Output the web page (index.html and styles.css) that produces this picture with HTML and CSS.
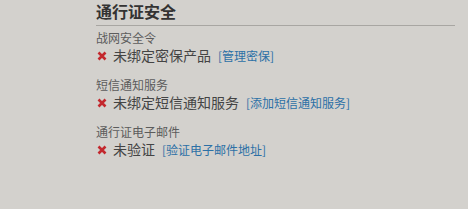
FILE: index.html
```html
<!DOCTYPE html>
<html lang="zh-CN">
<head>
  <meta charset="UTF-8">
  <title>通行证安全</title>
  <link rel="stylesheet" href="styles.css">
</head>
<body>
  <div class="security">
    <h2 class="security-title">通行证安全</h2>

    <div class="item">
      <div class="item-label">战网安全令</div>
      <div class="item-status">
        <svg class="icon-x" viewBox="0 0 10 10"><path d="M1.5 1.5 L8.5 8.5 M8.5 1.5 L1.5 8.5"/></svg>
        <span>未绑定密保产品</span>
        <a href="#" class="item-link">[管理密保]</a>
      </div>
    </div>

    <div class="item">
      <div class="item-label">短信通知服务</div>
      <div class="item-status">
        <svg class="icon-x" viewBox="0 0 10 10"><path d="M1.5 1.5 L8.5 8.5 M8.5 1.5 L1.5 8.5"/></svg>
        <span>未绑定短信通知服务</span>
        <a href="#" class="item-link">[添加短信通知服务]</a>
      </div>
    </div>

    <div class="item">
      <div class="item-label">通行证电子邮件</div>
      <div class="item-status">
        <svg class="icon-x" viewBox="0 0 10 10"><path d="M1.5 1.5 L8.5 8.5 M8.5 1.5 L1.5 8.5"/></svg>
        <span>未验证</span>
        <a href="#" class="item-link">[验证电子邮件地址]</a>
      </div>
    </div>
  </div>
</body>
</html>
```

FILE: styles.css
```css
body {
  margin: 0;
  background-color: #d3d1cd;
  font-family: "Noto Sans CJK SC", "Liberation Sans", sans-serif;
  color: #444;
}

.security {
  padding-left: 96px;
  width: 359px;
}

.security-title {
  margin: 0;
  padding: 1px 0 4px 0;
  font-size: 16px;
  line-height: 20px;
  font-weight: bold;
  color: #333;
  border-bottom: 1px solid #a8a6a2;
}

.item {
  margin-top: 4px;
  margin-bottom: 12px;
}

.item-label {
  font-size: 12px;
  line-height: 16px;
  color: #5c5c5c;
}

.item-status {
  display: flex;
  align-items: center;
  font-size: 14px;
  line-height: 19px;
}

.icon-x {
  width: 10px;
  height: 10px;
  margin-left: 1px;
  margin-right: 6px;
  stroke: #c3282d;
  stroke-width: 2.6;
  fill: none;
}

.item-link {
  margin-left: 7px;
  font-size: 12px;
  color: #2c70a6;
  text-decoration: none;
}
```
